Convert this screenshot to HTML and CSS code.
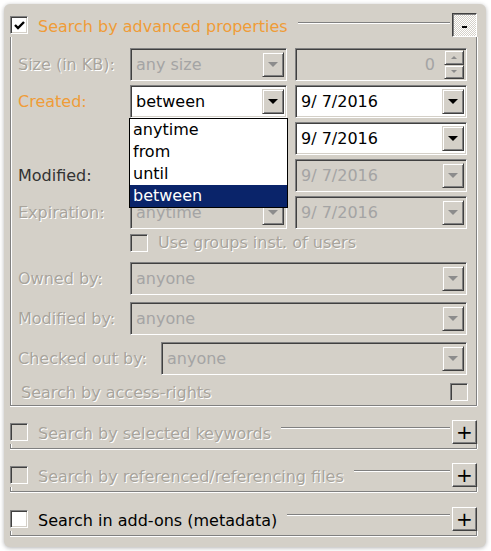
FILE: index.html
```html
<!DOCTYPE html>
<html lang="en">
<head>
    <meta charset="UTF-8">
    <title>Advanced search</title>
    <link rel="stylesheet" href="styles.css">
</head>
<body>

<div class="panel">

    <!-- Advanced properties -->
    <div class="section">
        <div class="sec-head">
            <span class="cb on">
                <svg width="13" height="13" viewBox="0 0 13 13"><path d="M2 6 L5 9 L11 3" fill="none" stroke="#000" stroke-width="2.4"/></svg>
            </span>
            <span class="sec-title orange">Search by advanced properties</span>
            <span class="sec-line first"></span>
            <span class="sec-btn pressed"><span class="dash"></span></span>
        </div>
        <div class="sec-body">
            <div class="row">
                <span class="lbl">Size (in KB):</span>
                <div class="field"><span class="val">any size</span><span class="drop off"></span></div>
                <div class="field"><span class="val num">0</span>
                    <span class="spin"><span class="spin-up"></span><span class="spin-down"></span></span>
                </div>
            </div>
            <div class="row">
                <span class="lbl orange">Created:</span>
                <div class="field white open">
                    <span class="val">between</span><span class="drop"></span>
                    <ul class="list">
                        <li>anytime</li>
                        <li>from</li>
                        <li>until</li>
                        <li class="sel">between</li>
                    </ul>
                </div>
                <div class="field white"><span class="val date">9/ 7/2016</span><span class="drop"></span></div>
            </div>
            <!-- left combos of the next two rows sit under the open list -->
            <div class="row">
                <span></span>
                <div class="field"><span class="val"></span><span class="drop off"></span></div>
                <div class="field white"><span class="val date">9/ 7/2016</span><span class="drop"></span></div>
            </div>
            <div class="row">
                <span class="lbl dark">Modified:</span>
                <div class="field"><span class="val"></span><span class="drop off"></span></div>
                <div class="field"><span class="val date">9/ 7/2016</span><span class="drop off"></span></div>
            </div>
            <div class="row">
                <span class="lbl">Expiration:</span>
                <div class="field"><span class="val">anytime</span><span class="drop off"></span></div>
                <div class="field"><span class="val date">9/ 7/2016</span><span class="drop off"></span></div>
            </div>
            <div class="check-row">
                <span class="cb small"></span>
                <span class="lbl">Use groups inst. of users</span>
            </div>
            <div class="row wide owned">
                <span class="lbl">Owned by:</span>
                <div class="field"><span class="val">anyone</span><span class="drop off"></span></div>
            </div>
            <div class="row wide">
                <span class="lbl">Modified by:</span>
                <div class="field"><span class="val">anyone</span><span class="drop off"></span></div>
            </div>
            <div class="row wider">
                <span class="lbl">Checked out by:</span>
                <div class="field"><span class="val">anyone</span><span class="drop off"></span></div>
            </div>
            <div class="access-row">
                <span class="lbl">Search by access-rights</span>
                <span class="cb small"></span>
            </div>
        </div>
    </div>

    <!-- Collapsed sections -->
    <div class="section s2">
        <div class="sec-head">
            <span class="cb"></span>
            <span class="sec-title dis">Search by selected keywords</span>
            <span class="sec-line"></span>
            <span class="sec-btn">+</span>
        </div>
        <div class="sec-body closed"></div>
    </div>

    <div class="section s3">
        <div class="sec-head">
            <span class="cb"></span>
            <span class="sec-title dis">Search by referenced/referencing files</span>
            <span class="sec-line"></span>
            <span class="sec-btn">+</span>
        </div>
        <div class="sec-body closed"></div>
    </div>

    <div class="section s4">
        <div class="sec-head">
            <span class="cb on"></span>
            <span class="sec-title">Search in add-ons (metadata)</span>
            <span class="sec-line"></span>
            <span class="sec-btn">+</span>
        </div>
        <div class="sec-body closed"></div>
    </div>

</div>

</body>
</html>
```

FILE: styles.css
```css
* {
    margin: 0;
    padding: 0;
    box-sizing: border-box;
}

body {
    background: #fff;
    font-family: "DejaVu Sans", Tahoma, sans-serif;
    font-size: 16px;
    padding: 4px;
}

.panel {
    width: 482px;
    height: 543px;
    background: #d4d0c8;
    border-radius: 6px;
    box-shadow: 0 1px 4px rgba(0, 0, 0, 0.3);
    padding: 9px 9px 0 6px;
}

/* section header: checkbox, title, etched line, +/- button */
.section.s2 {
    margin-top: 14px;
}

.section.s3 {
    margin-top: 14px;
}

.section.s4 {
    margin-top: 15px;
}

.sec-head {
    display: flex;
    align-items: center;
    height: 24px;
}

.sec-head .sec-title {
    padding-top: 3px;
}

.sec-title {
    margin-left: 10px;
    white-space: nowrap;
    color: #000;
}

.sec-line {
    flex: 1;
    align-self: flex-start;
    margin: 7px 2px 0 10px;
    height: 2px;
    border-top: 1px solid #808080;
    border-bottom: 1px solid #fff;
}

.sec-line.first {
    margin-top: 9px;
}

.sec-btn {
    width: 25px;
    height: 24px;
    border: 1px solid;
    border-color: #fff #404040 #404040 #fff;
    box-shadow: inset -1px -1px #808080;
    display: flex;
    align-items: center;
    justify-content: center;
    font-size: 20px;
    line-height: 1;
    color: #000;
}

.sec-btn.pressed {
    border-color: #404040 #fff #fff #404040;
    box-shadow: inset 1px 1px #808080;
    background: repeating-conic-gradient(#fff 0 25%, #d4d0c8 0 50%) 0 0 / 2px 2px;
    padding-top: 3px;
}

.dash {
    width: 5px;
    height: 2px;
    background: #000;
}

.sec-body {
    border: 1px solid #808080;
    border-top: none;
    box-shadow: inset 1px 0 #fff, 1px 0 #fff, 0 1px #fff;
    padding: 11px 8px 3px 7px;
}

.sec-body.closed {
    height: 5px;
    padding: 0;
}

/* colours */
.orange {
    color: #ef9c38;
}

.lbl {
    color: #a8a49c;
    text-shadow: 1px 1px #fff;
    white-space: nowrap;
}

.lbl.orange {
    color: #ef9c38;
    text-shadow: none;
}

.lbl.dark {
    color: #333;
    text-shadow: none;
}

.sec-title.dis {
    color: #a8a49c;
    text-shadow: 1px 1px #fff;
}

.sec-title.orange {
    color: #ef9c38;
}

/* checkbox */
.cb {
    width: 18px;
    height: 18px;
    flex: none;
    border: 1px solid;
    border-color: #808080 #fff #fff #808080;
    box-shadow: inset 1px 1px #404040, inset -1px -1px #d4d0c8;
    background: #d4d0c8;
    display: flex;
    align-items: center;
    justify-content: center;
}

.cb.on {
    background: #fff;
}

/* rows of fields */
.row {
    display: grid;
    grid-template-columns: 104px 157px 172px;
    column-gap: 8px;
    align-items: center;
    height: 33px;
    margin-bottom: 4px;
}

.row.wide {
    grid-template-columns: 104px 337px;
    margin-bottom: 7px;
}

.row.owned {
    margin-top: 10px;
}

.row.wider {
    grid-template-columns: 135px 306px;
    margin-top: 1px;
}

.field {
    position: relative;
    height: 33px;
    background: #d4d0c8;
    border: 1px solid;
    border-color: #808080 #fff #fff #808080;
    box-shadow: inset 1px 1px #404040, inset -1px -1px #d4d0c8;
    display: flex;
    align-items: center;
    padding: 2px;
}

.field.white {
    background: #fff;
}

.val {
    flex: 1;
    padding-left: 3px;
    color: #a4a4a4;
    white-space: pre;
}

.white .val {
    color: #000;
}

.val.num {
    text-align: right;
    padding-right: 9px;
}

.drop {
    width: 22px;
    height: 25px;
    background: #d4d0c8;
    border: 1px solid;
    border-color: #d4d0c8 #404040 #404040 #d4d0c8;
    box-shadow: inset 1px 1px #fff, inset -1px -1px #808080;
    display: flex;
    align-items: center;
    justify-content: center;
}

.drop::after {
    content: "";
    border-left: 5px solid transparent;
    border-right: 5px solid transparent;
    border-top: 5px solid #000;
}

.drop.off::after {
    border-top-color: #8c8c8c;
}

.spin {
    width: 20px;
    height: 29px;
    display: flex;
    flex-direction: column;
}

.spin-up, .spin-down {
    flex: 1;
    border: 1px solid;
    border-color: #d4d0c8 #404040 #404040 #d4d0c8;
    box-shadow: inset 1px 1px #fff, inset -1px -1px #808080;
    display: flex;
    align-items: center;
    justify-content: center;
}

.spin-up::after {
    content: "";
    border-left: 3px solid transparent;
    border-right: 3px solid transparent;
    border-bottom: 3px solid #8c8c8c;
}

.spin-down::after {
    content: "";
    border-left: 3px solid transparent;
    border-right: 3px solid transparent;
    border-top: 3px solid #8c8c8c;
}

/* open dropdown list */
.list {
    position: absolute;
    top: 32px;
    left: -2px;
    width: 159px;
    list-style: none;
    background: #fff;
    border: 1px solid #000;
    z-index: 2;
}

.list li {
    height: 22px;
    line-height: 22px;
    padding-left: 3px;
    color: #000;
}

.list li.sel {
    background: #0a246a;
    color: #fff;
}

.check-row {
    display: flex;
    align-items: center;
    gap: 10px;
    padding-left: 112px;
    height: 19px;
    margin-top: 4px;
}

.access-row {
    display: flex;
    align-items: center;
    justify-content: space-between;
    height: 20px;
    margin-top: 7px;
    padding-left: 3px;
}
```
